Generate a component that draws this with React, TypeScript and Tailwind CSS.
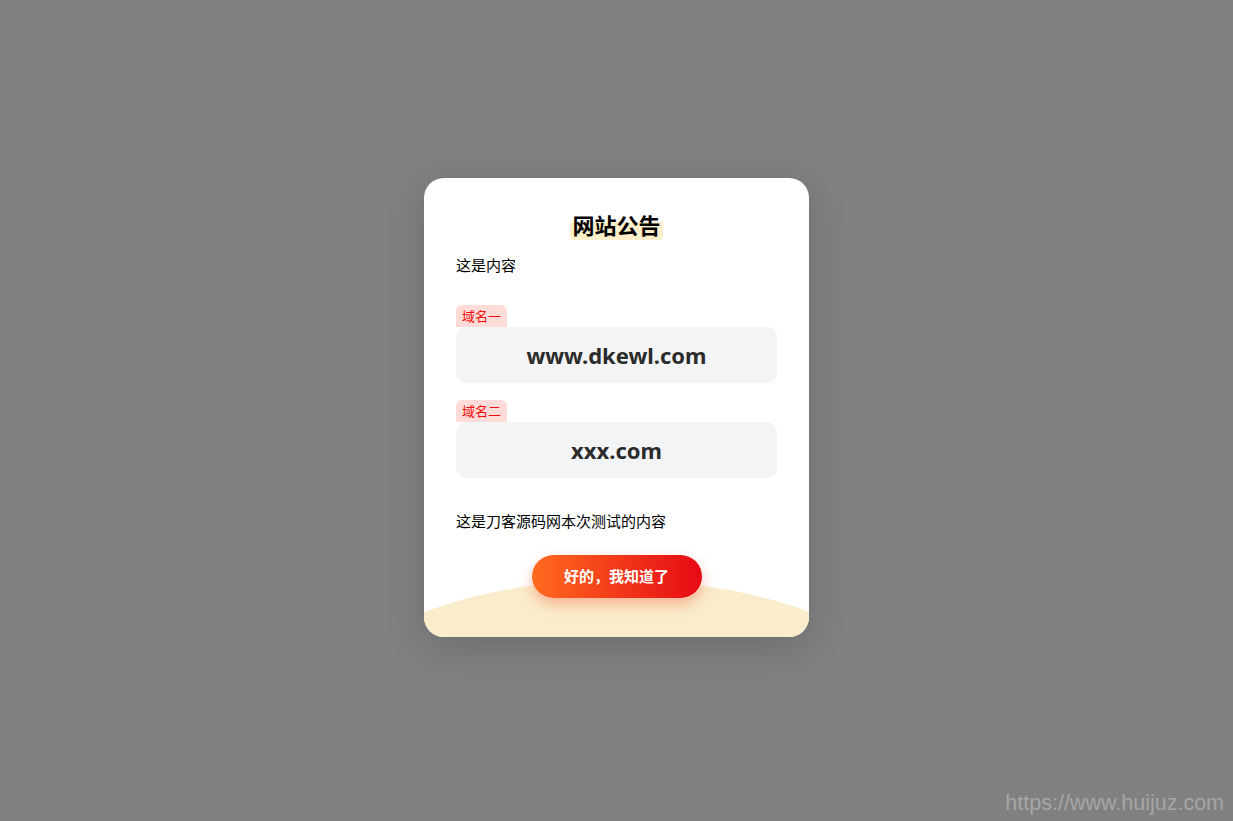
import React from "react";

const domains = [
  { label: "域名一", value: "www.dkewl.com" },
  { label: "域名二", value: "xxx.com" },
];

const cjk = "font-['Microsoft_YaHei','Noto_Sans_CJK_SC',sans-serif]";

export default function App() {
  return (
    <div className={`relative flex min-h-screen w-full items-center justify-center bg-[#808080] pb-[6px] ${cjk}`}>
      <div className="relative w-[385px] overflow-hidden rounded-[20px] bg-white px-8 pt-8 pb-[39px] shadow-[0_10px_40px_rgba(0,0,0,0.15)]">
        {/* yellow arc at the bottom */}
        <div className="absolute top-[402px] left-1/2 h-[276px] w-[600px] -translate-x-1/2 rounded-[50%] bg-[#faedcb]" />

        <div className="relative flex flex-col">
          <h1 className="h-7 text-center text-[22px] leading-7 font-bold text-black">
            <span className="rounded bg-[linear-gradient(transparent_45%,#fcefc9_45%)] px-[2px]">网站公告</span>
          </h1>
          <p className="mt-[17px] h-5 text-[15px] leading-5 text-black">这是内容</p>

          <div className="mt-[30px] flex flex-col gap-[17px]">
            {domains.map((d) => (
              <div key={d.label} className="flex flex-col items-start">
                <span className="h-[22px] rounded-t-[6px] bg-[#ffdcd8] px-[6px] text-[13px] leading-[22px] text-[#f20d0d]">
                  {d.label}
                </span>
                <div className="flex h-[56px] w-full items-center justify-center rounded-[10px] bg-[#f3f4f6] font-['Noto_Sans','Open_Sans',sans-serif] text-[22px] font-bold text-[#2b2b2b]">
                  {d.value}
                </div>
              </div>
            ))}
          </div>

          <p className="mt-[33px] h-5 text-[15px] leading-5 text-black">这是刀客源码网本次测试的内容</p>

          <div className="mt-6 flex justify-center">
            <button className="h-[43px] w-[170px] rounded-full bg-[linear-gradient(90deg,#ff6b1f,#e60914)] text-[15px] font-bold text-white shadow-[0_6px_14px_rgba(240,70,40,0.35)]">
              好的，我知道了
            </button>
          </div>
        </div>
      </div>

      <span className="absolute right-[9px] bottom-[2px] font-['Liberation_Sans',Arial,sans-serif] text-[21.5px] text-[#a6a6a6]">
        https://www.huijuz.com
      </span>
    </div>
  );
}
